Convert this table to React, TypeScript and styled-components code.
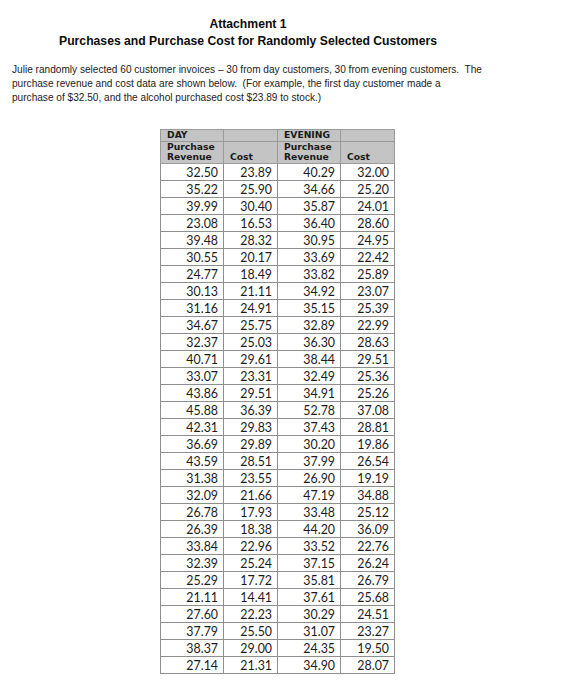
import React from 'react';
import styled, {createGlobalStyle} from 'styled-components';

const GlobalStyle = createGlobalStyle`
  body {
    margin: 0;
    background: #ffffff;
    font-family: "Liberation Sans", Arial, sans-serif;
    color: #111111;
  }
`;

const Page = styled.div`
  width: 583px;
  height: 700px;
  padding-top: 16px;
  box-sizing: border-box;
`;

const Heading = styled.div`
  width: 496px;
`;

const Title = styled.h1`
  margin: 0;
  text-align: center;
  font-size: 12.2px;
  line-height: 17px;
  font-weight: bold;
  color: #0c0c0c;
`;

const Intro = styled.p`
  margin: 13px 0 0 12px;
  white-space: nowrap;
  font-size: 10.1px;
  line-height: 13.8px;
  color: #222222;
`;

const Table = styled.table`
  margin: 25px 0 0 160px;
  border-collapse: collapse;
  border: 1.5px solid #8a8a8a;
  font-family: Lato, "Open Sans", sans-serif;
`;

const HeadCell = styled.th<{$tall?: boolean; $w: number}>`
  width: ${p => p.$w}px;
  box-sizing: border-box;
  height: ${p => (p.$tall ? 22 : 11)}px;
  padding: 0 4px 0 6px;
  background: #c4c4c4;
  border: 1px solid #9a9a9a;
  text-align: left;
  vertical-align: bottom;
  font-family: "DejaVu Sans", Verdana, sans-serif;
  font-size: 9.2px;
  line-height: 10.5px;
  font-weight: bold;
  color: #1a1a1a;
`;

const Cell = styled.td`
  height: 17px;
  box-sizing: border-box;
  padding: 1px 5px 0 0;
  border: 1px solid #8f8f8f;
  text-align: right;
  font-size: 12.4px;
  line-height: 15px;
  color: #1c1c1c;
`;

const rows: [string, string, string, string][] = [
  ['32.50', '23.89', '40.29', '32.00'],
  ['35.22', '25.90', '34.66', '25.20'],
  ['39.99', '30.40', '35.87', '24.01'],
  ['23.08', '16.53', '36.40', '28.60'],
  ['39.48', '28.32', '30.95', '24.95'],
  ['30.55', '20.17', '33.69', '22.42'],
  ['24.77', '18.49', '33.82', '25.89'],
  ['30.13', '21.11', '34.92', '23.07'],
  ['31.16', '24.91', '35.15', '25.39'],
  ['34.67', '25.75', '32.89', '22.99'],
  ['32.37', '25.03', '36.30', '28.63'],
  ['40.71', '29.61', '38.44', '29.51'],
  ['33.07', '23.31', '32.49', '25.36'],
  ['43.86', '29.51', '34.91', '25.26'],
  ['45.88', '36.39', '52.78', '37.08'],
  ['42.31', '29.83', '37.43', '28.81'],
  ['36.69', '29.89', '30.20', '19.86'],
  ['43.59', '28.51', '37.99', '26.54'],
  ['31.38', '23.55', '26.90', '19.19'],
  ['32.09', '21.66', '47.19', '34.88'],
  ['26.78', '17.93', '33.48', '25.12'],
  ['26.39', '18.38', '44.20', '36.09'],
  ['33.84', '22.96', '33.52', '22.76'],
  ['32.39', '25.24', '37.15', '26.24'],
  ['25.29', '17.72', '35.81', '26.79'],
  ['21.11', '14.41', '37.61', '25.68'],
  ['27.60', '22.23', '30.29', '24.51'],
  ['37.79', '25.50', '31.07', '23.27'],
  ['38.37', '29.00', '24.35', '19.50'],
  ['27.14', '21.31', '34.90', '28.07'],
];

const widths = [63, 54, 63, 54];

const App = () => {
  return (
    <Page>
      <GlobalStyle/>
      <Heading>
        <Title>Attachment 1</Title>
        <Title>Purchases and Purchase Cost for Randomly Selected Customers</Title>
      </Heading>
      <Intro>
        Julie randomly selected 60 customer invoices – 30 from day customers, 30 from evening customers.&nbsp; The<br/>
        purchase revenue and cost data are shown below.&nbsp; (For example, the first day customer made a<br/>
        purchase of $32.50, and the alcohol purchased cost $23.89 to stock.)
      </Intro>
      <Table>
        <thead>
          <tr>
            <HeadCell $w={widths[0]}>DAY</HeadCell>
            <HeadCell $w={widths[1]}></HeadCell>
            <HeadCell $w={widths[2]}>EVENING</HeadCell>
            <HeadCell $w={widths[3]}></HeadCell>
          </tr>
          <tr>
            <HeadCell $tall $w={widths[0]}>Purchase<br/>Revenue</HeadCell>
            <HeadCell $tall $w={widths[1]}>Cost</HeadCell>
            <HeadCell $tall $w={widths[2]}>Purchase<br/>Revenue</HeadCell>
            <HeadCell $tall $w={widths[3]}>Cost</HeadCell>
          </tr>
        </thead>
        <tbody>
          {rows.map((r, i) => (
            <tr key={i}>
              {r.map((v, j) => <Cell key={j}>{v}</Cell>)}
            </tr>
          ))}
        </tbody>
      </Table>
    </Page>
  );
};

export default App;
